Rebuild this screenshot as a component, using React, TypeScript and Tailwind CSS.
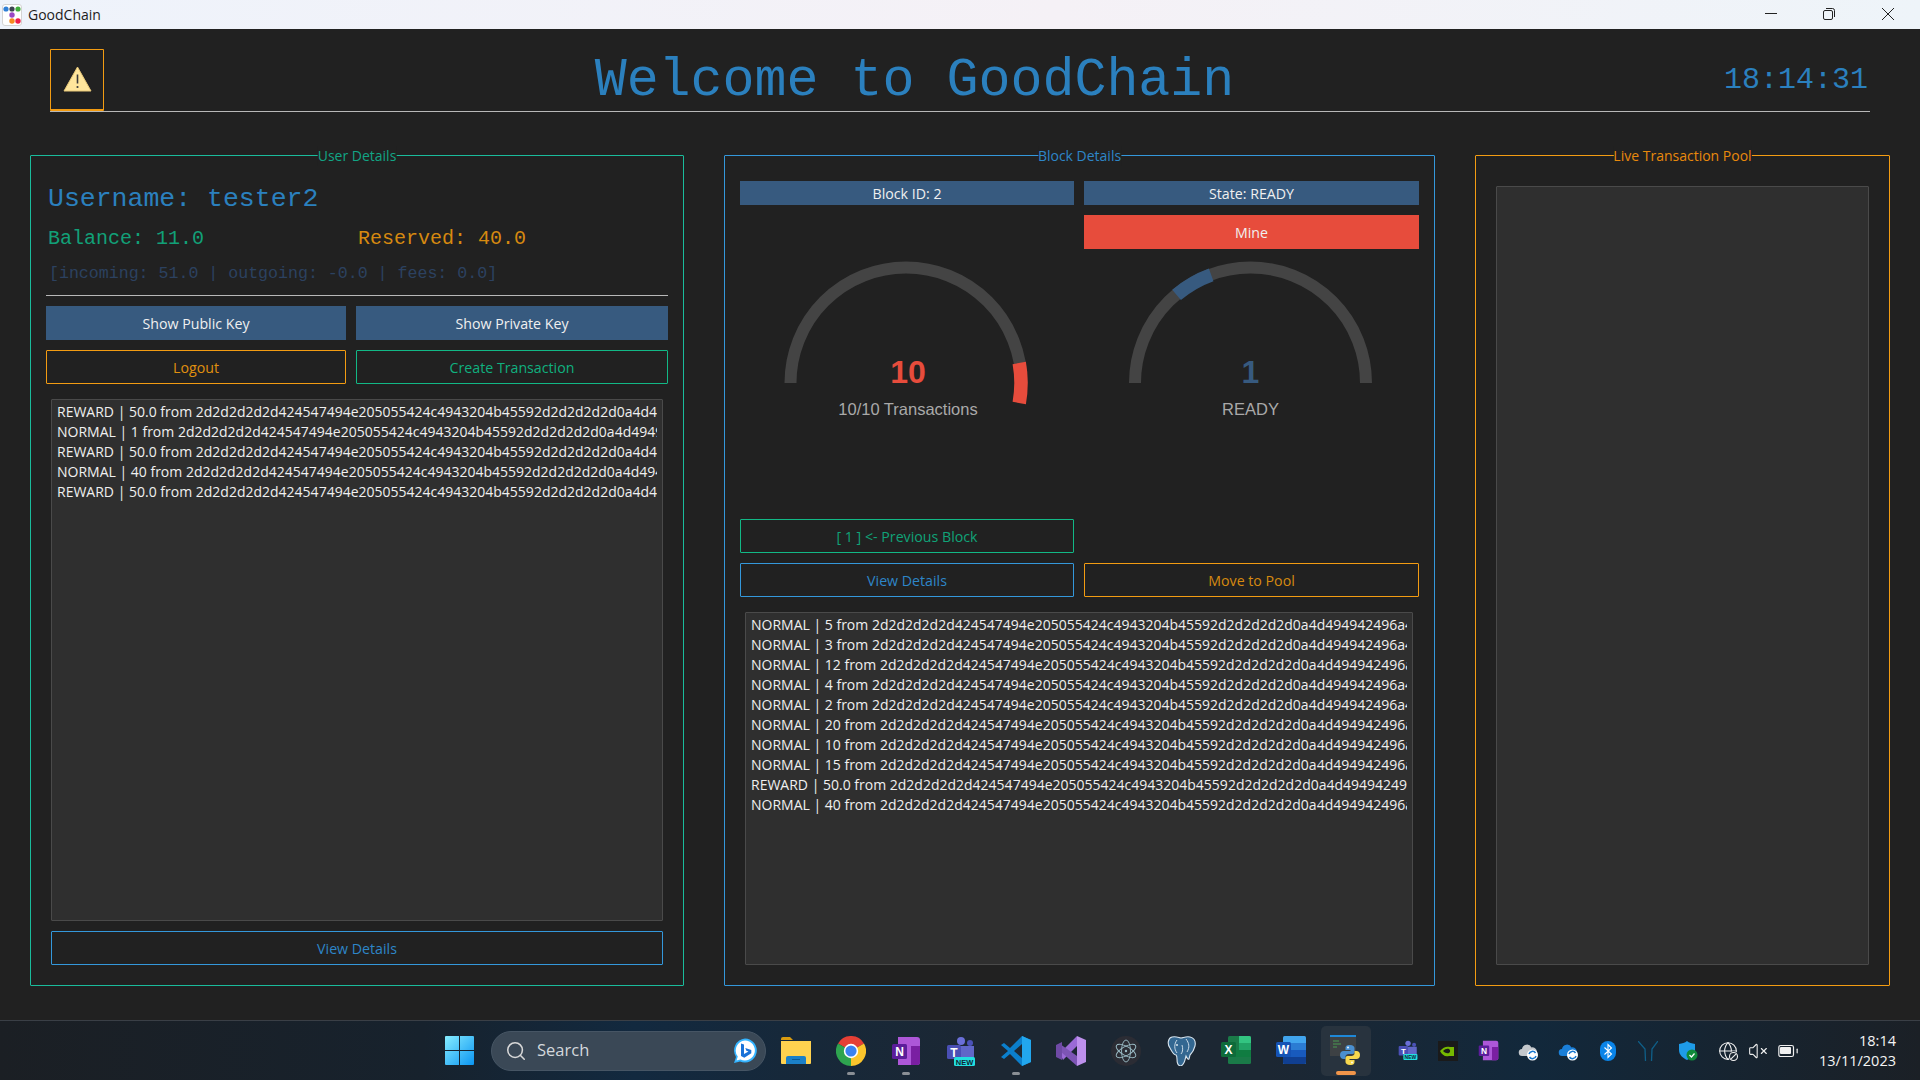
import { Battery, Globe, Search, VolumeX } from "lucide-react";
import type { ReactNode } from "react";

const HEX =
  "2d2d2d2d2d424547494e205055424c4943204b45592d2d2d2d2d0a4d494942496a414e42676b71686b6947397730424151454641414f43415138414d49494243";

const userTx = ["REWARD | 50.0", "NORMAL | 1", "REWARD | 50.0", "NORMAL | 40", "REWARD | 50.0"];
const blockTx = [
  "NORMAL | 5",
  "NORMAL | 3",
  "NORMAL | 12",
  "NORMAL | 4",
  "NORMAL | 2",
  "NORMAL | 20",
  "NORMAL | 10",
  "NORMAL | 15",
  "REWARD | 50.0",
  "NORMAL | 40",
];

function Panel({
  title,
  border,
  text,
  width,
  children,
}: {
  title: string;
  border: string;
  text: string;
  width: string;
  children: ReactNode;
}) {
  return (
    <section className={`relative flex flex-col rounded-[1px] border ${border} ${width}`}>
      <span className={`absolute left-1/2 top-[-10px] -translate-x-1/2 bg-[#212121] text-[14px] leading-[20px] ${text}`}>
        {title}
      </span>
      {children}
    </section>
  );
}

function TxList({ rows, className }: { rows: string[]; className: string }) {
  return (
    <div className={`overflow-hidden rounded-[1px] border border-[#4a4a4a] bg-[#2f2f2f] px-[5px] pt-[2px] ${className}`}>
      <div className="overflow-hidden whitespace-nowrap text-[14px] leading-[20px] text-[#f0f0f0]">
        {rows.map((row, i) => (
          <div key={i}>
            {row} from {HEX}
          </div>
        ))}
      </div>
    </div>
  );
}

function FilledButton({ label, className }: { label: string; className: string }) {
  return (
    <button className={`flex items-center justify-center pt-px text-[14.2px] text-[#f0f0f0] ${className}`}>{label}</button>
  );
}

function OutlineButton({ label, className }: { label: string; className: string }) {
  return (
    <button className={`flex items-center justify-center rounded-[1px] border bg-transparent pt-px text-[14.2px] ${className}`}>
      {label}
    </button>
  );
}

function Gauge({
  from,
  to,
  value,
  label,
  color,
  textX,
}: {
  from: number;
  to: number;
  value: string;
  label: string;
  color: string;
  textX: number;
}) {
  const cx = 166;
  const cy = 124;
  const r = 115;
  const point = (deg: number) => {
    const a = (deg * Math.PI) / 180;
    return `${cx - r * Math.cos(a)} ${cy - r * Math.sin(a)}`;
  };
  return (
    <svg viewBox="0 0 334 170" className="h-[170px] w-full">
      <path d={`M${cx - 115.5} ${cy}A115.5 115.5 0 0 1 ${cx + 115.5} ${cy}`} fill="none" stroke="#444444" strokeWidth="12" />
      <path d={`M${point(from)}A${r} ${r} 0 0 1 ${point(to)}`} fill="none" stroke={color} strokeWidth="13.5" />
      <text x={textX} y="124" textAnchor="middle" fontFamily="Liberation Sans" fontWeight="700" fontSize="32" fill={color}>
        {value}
      </text>
      <text x={textX} y="156" textAnchor="middle" fontFamily="Liberation Sans" fontSize="16.5" fill="#a9a9a9">
        {label}
      </text>
    </svg>
  );
}

function WindowControls() {
  return (
    <div className="ml-auto flex items-center">
      <svg width="60" height="29" viewBox="0 0 60 29" fill="none" stroke="#222" strokeWidth="1">
        <path d="M25 13.5H37" />
      </svg>
      <svg width="60" height="29" viewBox="0 0 60 29" fill="none" stroke="#222" strokeWidth="1">
        <rect x="23.5" y="10.5" width="9" height="9" rx="1.5" />
        <path d="M26 8.5h6.5a2 2 0 0 1 2 2V17" />
      </svg>
      <svg width="60" height="29" viewBox="0 0 60 29" fill="none" stroke="#222" strokeWidth="1">
        <path d="M22 8l12 12M34 8L22 20" />
      </svg>
    </div>
  );
}

function AppLogo() {
  return (
    <svg width="20" height="22" viewBox="0 0 20 22" className="ml-[2px] shrink-0">
      <rect x="0.5" y="0.5" width="19" height="21" rx="2.5" fill="#fff" stroke="#d4d4d4" />
      <circle cx="4" cy="5" r="2.6" fill="#2f7fd6" />
      <circle cx="10" cy="5" r="2.6" fill="#3c4450" />
      <circle cx="16" cy="5" r="2.6" fill="#3fae3a" />
      <circle cx="10" cy="11" r="2.7" fill="#9a48c4" />
      <circle cx="10" cy="17" r="2.7" fill="#f58a1f" />
      <circle cx="16" cy="17" r="2.7" fill="#ee1f4a" />
    </svg>
  );
}

function WarningIcon() {
  return (
    <svg width="29" height="26" viewBox="0 0 29 26">
      <path d="M14.5 1L28 25H1Z" fill="#ffe69c" stroke="#e8c878" strokeWidth="1" strokeLinejoin="round" />
      <path d="M14.5 8.5V17.5" stroke="#3a3a3a" strokeWidth="1.6" />
      <circle cx="14.5" cy="21" r="1.1" fill="#3a3a3a" />
    </svg>
  );
}

function WinLogo() {
  return (
    <svg width="29" height="29" viewBox="0 0 29 29" className="shrink-0">
      <defs>
        <linearGradient id="win" x1="0" y1="0" x2="1" y2="1">
          <stop offset="0" stopColor="#86ecff" />
          <stop offset="1" stopColor="#0b95f2" />
        </linearGradient>
      </defs>
      <path d="M0 1a1 1 0 0 1 1-1h13v14H0ZM15 0h13a1 1 0 0 1 1 1v13H15ZM0 15h14v14H1a1 1 0 0 1-1-1ZM15 15h14v13a1 1 0 0 1-1 1H15Z" fill="url(#win)" />
    </svg>
  );
}

function BingIcon() {
  return (
    <svg width="26" height="26" viewBox="0 0 26 26">
      <path d="M13 .5a12 12 0 1 1-5 23l-6 1.500 2-6A12 12 0 0 1 13 .5Z" fill="#35b4ff" />
      <path d="M13 2.500a10 10 0 1 1-4.500 19l-4 1 1.300-4A10 10 0 0 1 13 2.500Z" fill="#fff" />
      <path d="M9 5.500l3 1v9.500l4.500-2.500-2.200-.8-1-2.700 6 2v3.300l-7 4.500L9 18Z" fill="#1a73d8" />
    </svg>
  );
}

function FolderIcon() {
  return (
    <svg width="30" height="27" viewBox="0 0 30 27">
      <path d="M0 2a2 2 0 0 1 2-2h7l3 3h-12Z" fill="#d99c10" />
      <path d="M0 4h30v22a1 1 0 0 1-1 1H1a1 1 0 0 1-1-1Z" fill="#ffd24f" />
      <path d="M5 27v-6a2 2 0 0 1 2-2h16a2 2 0 0 1 2 2v6Z" fill="#1b80c8" />
      <path d="M11 22.5h8" stroke="#0d5a96" strokeWidth="1" />
    </svg>
  );
}

function ChromeIcon() {
  return (
    <svg width="30" height="30" viewBox="0 0 30 30">
      <path d="M15 15L2 7.5A15 15 0 0 1 28 7.5Z" fill="#e53f35" />
      <path d="M15 15L28 7.5A15 15 0 0 1 15 30Z" fill="#fbc52c" />
      <path d="M15 15L15 30A15 15 0 0 1 2 7.5Z" fill="#2ea44f" />
      <circle cx="15" cy="15" r="7.2" fill="#fff" />
      <circle cx="15" cy="15" r="5.6" fill="#3b82f0" />
    </svg>
  );
}

function OneNoteIcon({ size = 30 }: { size?: number }) {
  return (
    <svg width={size} height={size} viewBox="0 0 30 30">
      <path d="M7 1h19a3 3 0 0 1 3 3v22a3 3 0 0 1-3 3H7Z" fill="#ad57d8" />
      <path d="M20 10h9v9h-9ZM20 19h9v7a3 3 0 0 1-3 3h-6Z" fill="#7a1fa2" />
      <rect x="1" y="8" width="15" height="15" rx="1.5" fill="#5b1d9a" />
      <text x="8.5" y="20" textAnchor="middle" fontFamily="Liberation Sans" fontWeight="700" fontSize="12" fill="#fff">
        N
      </text>
    </svg>
  );
}

function TeamsIcon({ scale = 1 }: { scale?: number }) {
  return (
    <svg width={30 * scale} height={30 * scale} viewBox="0 0 30 30">
      <circle cx="15" cy="5" r="4" fill="#6a6fd8" />
      <circle cx="24" cy="7" r="3" fill="#4b52b8" />
      <path d="M13 10h15v11a4 4 0 0 1-4 4h-7a4 4 0 0 1-4-4Z" fill="#6067c8" />
      <rect x="1" y="9" width="14" height="14" rx="1.5" fill="#4a4fb5" />
      <text x="8" y="20.5" textAnchor="middle" fontFamily="Liberation Sans" fontWeight="700" fontSize="12" fill="#fff">
        T
      </text>
      <rect x="8" y="21" width="21" height="9" rx="1.5" fill="#22dfe0" />
      <text x="18.5" y="28.5" textAnchor="middle" fontFamily="Liberation Sans" fontWeight="700" fontSize="7.5" fill="#123">
        NEW
      </text>
    </svg>
  );
}

function VsCodeIcon() {
  return (
    <svg width="30" height="30" viewBox="0 0 30 30">
      <path d="M21 0l9 4v22l-9 4-12-12-6 5-3-2 7-6-7-6 3-2 6 5Z" fill="#0b7fcc" />
      <path d="M21 0l9 4v22l-9 4Z" fill="#22a7ee" />
      <path d="M21 8l-8 7 8 7Z" fill="#1e2a36" />
    </svg>
  );
}

function VisualStudioIcon() {
  return (
    <svg width="30" height="30" viewBox="0 0 30 30">
      <path d="M21 0L4 17l3 7 14-14Z" fill="#9a6ad6" />
      <path d="M4 8L21 20v10L4 15Z" fill="#7d55b5" />
      <path d="M0 9l6-3v18l-6-3Z" fill="#6f4aa6" />
      <path d="M21 0l9 4v22l-9 4Z" fill="#bd90ec" />
    </svg>
  );
}

function ElectronIcon() {
  return (
    <svg width="30" height="30" viewBox="0 0 30 30">
      <circle cx="15" cy="15" r="15" fill="#2b2c34" />
      <g fill="none" stroke="#9bbcc6" strokeWidth="0.9">
        <ellipse cx="15" cy="15" rx="11" ry="4.5" transform="rotate(30 15 15)" />
        <ellipse cx="15" cy="15" rx="11" ry="4.5" transform="rotate(90 15 15)" />
        <ellipse cx="15" cy="15" rx="11" ry="4.5" transform="rotate(150 15 15)" />
      </g>
      <circle cx="15" cy="15" r="1.2" fill="#9bbcc6" />
    </svg>
  );
}

function PostgresIcon() {
  return (
    <svg width="30" height="30" viewBox="0 0 30 30">
      <path
        d="M6 1c5-1 7 1 9 1s5-2 9-1c4 1 6 4 5 9-1 4-3 7-5 9l-1 4c-1 1-2-1-3-3-1 3-1 8-5 10-3 0-4-2-4-7 0-2 0-3-1-4-2 0-4-3-6-7C1 8 2 2 6 1Z"
        fill="#336791"
        stroke="#d8e4ee"
        strokeWidth="1.1"
      />
      <path d="M11 4c-3 4-3 9 0 13M20 3c3 4 4 8 1 13M15 18c2-2 2-6 1-9" fill="none" stroke="#d8e4ee" strokeWidth="0.9" />
      <circle cx="11" cy="9" r="1" fill="#d8e4ee" />
    </svg>
  );
}

function ExcelIcon() {
  return (
    <svg width="30" height="30" viewBox="0 0 30 30">
      <rect x="7" y="0" width="23" height="28" rx="1.5" fill="#1a7a48" />
      <path d="M18 0h10.5a1.5 1.5 0 0 1 1.5 1.5V7H18Z" fill="#33c481" />
      <rect x="18" y="7" width="12" height="7" fill="#21a366" />
      <rect x="7" y="14" width="23" height="7" fill="#107c41" />
      <rect x="0" y="6" width="15" height="15" rx="1.5" fill="#0e6b3a" />
      <text x="7.5" y="18" textAnchor="middle" fontFamily="Liberation Sans" fontWeight="700" fontSize="12" fill="#fff">
        X
      </text>
    </svg>
  );
}

function WordIcon() {
  return (
    <svg width="30" height="30" viewBox="0 0 30 30">
      <rect x="7" y="0" width="23" height="28" rx="1.5" fill="#41a5ee" />
      <rect x="7" y="7" width="23" height="7" fill="#2b7cd3" />
      <rect x="7" y="14" width="23" height="7" fill="#185abd" />
      <path d="M7 21h23v5.5a1.5 1.5 0 0 1-1.5 1.5h-20A1.5 1.5 0 0 1 7 26.5Z" fill="#103f91" />
      <rect x="0" y="6" width="15" height="15" rx="1.5" fill="#1553b5" />
      <text x="7.5" y="18" textAnchor="middle" fontFamily="Liberation Sans" fontWeight="700" fontSize="12" fill="#fff">
        W
      </text>
    </svg>
  );
}

function PythonShellIcon() {
  const snake =
    "M10 0C6 0 5.500 1.500 5.500 3V5H10.500V6H3.500C1.500 6 0 7.500 0 10S1.500 14 3.500 14H5.500V11.500C5.500 10 7 9 8.500 9H12.500C14 9 14.500 8 14.500 6.500V3C14.500 1.500 13 0 10 0Z";
  return (
    <svg width="32" height="31" viewBox="0 0 32 31">
      <rect x="0" y="0" width="26" height="21" fill="#3d4144" />
      <rect x="0" y="0" width="26" height="2" fill="#1e88d8" />
      <path d="M3 6h6M3 9h8M3 12h4" stroke="#4a9a50" strokeWidth="1" />
      <g transform="translate(10 10)">
        <path d={snake} fill="#4a8fd0" />
        <path d={snake} fill="#f7d84e" transform="rotate(180 10 10)" />
        <circle cx="8" cy="2.500" r="0.900" fill="#fff" />
        <circle cx="12" cy="17.500" r="0.900" fill="#fff" />
      </g>
    </svg>
  );
}

function NvidiaIcon() {
  return (
    <svg width="20" height="20" viewBox="0 0 20 20">
      <rect width="20" height="20" fill="#1a1a1a" />
      <path d="M2 10c3-4 7-5 10-4h4v9h-5c-4 1-7-1-9-5Z" fill="#76b900" />
      <path d="M5 10c2-2 4-2.500 6-2 1.500 1 1.500 3 0 4-2 .5-4 0-6-2Z" fill="#1a1a1a" />
    </svg>
  );
}

function SyncBadge() {
  return (
    <g>
      <circle cx="14" cy="14" r="5.5" fill="#fff" />
      <path d="M10.500 13a3.600 3.600 0 0 1 6.500-1M17.500 15a3.600 3.600 0 0 1-6.500 1" fill="none" stroke="#1878d0" strokeWidth="1.500" />
    </g>
  );
}

function CloudIcon({ color }: { color: string }) {
  return (
    <svg width="21" height="20" viewBox="0 0 20 20">
      <path d="M4 15a3.500 3.500 0 0 1-.5-7A5 5 0 0 1 13 6.500 4 4 0 0 1 15 15Z" fill={color} />
      <SyncBadge />
    </svg>
  );
}

function BluetoothIcon() {
  return (
    <svg width="16" height="20" viewBox="0 0 16 20">
      <rect width="16" height="20" rx="8" fill="#0a84e8" />
      <path d="M4.500 6.500l7 6.500-3.500 3.500V3.500l3.500 3.500-7 6.500" fill="none" stroke="#fff" strokeWidth="1.100" />
    </svg>
  );
}

function YIcon() {
  return (
    <svg width="20" height="20" viewBox="0 0 20 20" fill="none" stroke="#0f5f88" strokeWidth="1.300">
      <path d="M0 0l7 8 .5 12M20 0l-6 8-.5 12" />
    </svg>
  );
}

function ShieldIcon() {
  return (
    <svg width="20" height="20" viewBox="0 0 20 20">
      <path d="M9 0c2 2 5 2.500 8 3v6c0 5-4 8-8 10-4-2-8-5-8-10V3c3-.5 6-1 8-3Z" fill="#1e9be8" />
      <circle cx="14" cy="14" r="5.500" fill="#0f8a3a" />
      <path d="M11.500 14l2 2 3-3.500" fill="none" stroke="#fff" strokeWidth="1.200" />
    </svg>
  );
}

function GlobeBlocked() {
  return (
    <div className="relative">
      <Globe size={20} strokeWidth={1.3} className="text-[#f0f0f0]" />
      <svg width="11" height="11" viewBox="0 0 11 11" className="absolute bottom-[-1px] right-[-1px]">
        <circle cx="5.500" cy="5.500" r="5.200" fill="#1a2530" />
        <circle cx="5.500" cy="5.500" r="4" fill="none" stroke="#f0f0f0" strokeWidth="1.100" />
        <path d="M2.800 8.200l5.400-5.400" stroke="#f0f0f0" strokeWidth="1.100" />
      </svg>
    </div>
  );
}

function BatteryIcon() {
  return (
    <div className="relative">
      <Battery size={22} strokeWidth={1.3} className="text-[#f0f0f0]" />
      <span className="absolute left-[3px] top-[7.5px] h-[7px] w-[11px] rounded-[1px] bg-[#f0f0f0]" />
    </div>
  );
}

function TaskbarSlot({ active, dot, children }: { active?: boolean; dot?: boolean; children: ReactNode }) {
  return (
    <div
      className={`relative flex h-[50px] items-center justify-center rounded-[5px] ${
        active ? "mx-[2.5px] w-[50px] bg-[#28333e]" : "w-[55px]"
      }`}
    >
      {children}
      {dot && <span className="absolute bottom-[1px] h-[3px] w-[8px] rounded-full bg-[#8a8f95]" />}
      {active && <span className="absolute bottom-[1px] h-[4px] w-[20px] rounded-full bg-[#f0954a]" />}
    </div>
  );
}

function TraySlot({ children }: { children: ReactNode }) {
  return <div className="flex h-[50px] w-[40px] items-center justify-center">{children}</div>;
}

function Taskbar() {
  return (
    <footer className="flex h-[60px] items-center border-t border-[#3a3f46] bg-[linear-gradient(90deg,#1b1f24_0%,#17222d_22%,#12293f_33%,#1c2733_52%,#1c2733_66%,#12283b_80%,#1b2026_100%)] pl-[445px] pr-[24px]">
      <WinLogo />
      <div className="ml-[17px] flex h-[40px] w-[275px] items-center rounded-full border border-[#465564] bg-[#3a4856] pl-[13px] pr-[7px]">
        <Search size={22} strokeWidth={1.7} className="text-[#d8d8d8]" />
        <span className="ml-[10px] text-[16.5px] text-[#d4d8dc]">Search</span>
        <div className="ml-auto flex">
          <BingIcon />
        </div>
      </div>
      <div className="ml-[2px] flex">
        <TaskbarSlot>
          <FolderIcon />
        </TaskbarSlot>
        <TaskbarSlot dot>
          <ChromeIcon />
        </TaskbarSlot>
        <TaskbarSlot dot>
          <OneNoteIcon />
        </TaskbarSlot>
        <TaskbarSlot>
          <TeamsIcon />
        </TaskbarSlot>
        <TaskbarSlot dot>
          <VsCodeIcon />
        </TaskbarSlot>
        <TaskbarSlot>
          <VisualStudioIcon />
        </TaskbarSlot>
        <TaskbarSlot>
          <ElectronIcon />
        </TaskbarSlot>
        <TaskbarSlot>
          <PostgresIcon />
        </TaskbarSlot>
        <TaskbarSlot>
          <ExcelIcon />
        </TaskbarSlot>
        <TaskbarSlot>
          <WordIcon />
        </TaskbarSlot>
        <TaskbarSlot active>
          <PythonShellIcon />
        </TaskbarSlot>
      </div>
      <div className="ml-[15px] flex">
        <TraySlot>
          <TeamsIcon scale={0.67} />
        </TraySlot>
        <TraySlot>
          <NvidiaIcon />
        </TraySlot>
        <TraySlot>
          <OneNoteIcon size={21} />
        </TraySlot>
        <TraySlot>
          <CloudIcon color="#c4c8cc" />
        </TraySlot>
        <TraySlot>
          <CloudIcon color="#1a7fd8" />
        </TraySlot>
        <TraySlot>
          <BluetoothIcon />
        </TraySlot>
        <TraySlot>
          <YIcon />
        </TraySlot>
        <TraySlot>
          <ShieldIcon />
        </TraySlot>
      </div>
      <div className="ml-[5px] flex w-[90px] items-center">
        <div className="flex w-[30px] justify-center">
          <GlobeBlocked />
        </div>
        <div className="flex w-[29px] justify-center">
          <VolumeX size={20} strokeWidth={1.3} className="text-[#f0f0f0]" />
        </div>
        <div className="flex w-[31px] justify-center">
          <BatteryIcon />
        </div>
      </div>
      <div className="ml-auto text-right text-[14.5px] leading-[20px] text-[#f4f4f4]">
        <div>18:14</div>
        <div>13/11/2023</div>
      </div>
    </footer>
  );
}

export default function App() {
  return (
    <div className="flex h-[1080px] w-[1920px] flex-col overflow-hidden bg-[#212121] font-['Open_Sans',sans-serif]">
      <header className="flex h-[29px] items-center bg-[linear-gradient(90deg,#eef3fb_0%,#f5f1f6_55%,#eef4f9_100%)]">
        <AppLogo />
        <span className="ml-[6px] text-[14px] text-[#1c1c1c]">GoodChain</span>
        <WindowControls />
      </header>

      <main className="flex-1 px-[30px]">
        {/* Heading strip */}
        <div className="mx-[20px] mt-[20px] flex h-[63px] items-stretch border-b border-[#b8b8b8] font-['Liberation_Mono',monospace] text-[#2b80be]">
          <div className="flex w-[54px] items-center justify-center rounded-[1px] border border-b-2 border-[#f39c12] pb-[2px]">
            <WarningIcon />
          </div>
          <div className="flex flex-1 items-center justify-center pl-[1px] pt-[3px] text-[53.3px] leading-none">
            Welcome to GoodChain
          </div>
          <div className="flex w-[146px] items-center justify-start text-[30px] leading-none">18:14:31</div>
        </div>

        <div className="mt-[43px] flex h-[831px] gap-x-[40px]">
          <Panel title="User Details" border="border-[#1abc9c]" text="text-[#12a585]" width="w-[654px]">
            <div className="flex flex-1 flex-col px-[15px] pt-[26px]">
              <div className="ml-[2px] h-[34px] font-['Liberation_Mono',monospace] text-[26.5px] leading-[34px] text-[#2b80be]">
                Username: tester2
              </div>
              <div className="ml-[2px] mt-[10px] flex h-[26px] font-['Liberation_Mono',monospace] text-[20px] leading-[26px]">
                <span className="w-[310px] text-[#12a078]">Balance: 11.0</span>
                <span className="text-[#d68910]">Reserved: 40.0</span>
              </div>
              <div className="ml-[3px] mt-[11px] h-[22px] font-['Liberation_Mono',monospace] text-[16.6px] leading-[22px] text-[#2c4160]">
                [incoming: 51.0 | outgoing: -0.0 | fees: 0.0]
              </div>
              <div className="mt-[10px] h-px bg-[#b8b8b8]" />
              <div className="mt-[10px] grid grid-cols-[300px_312px] gap-x-[10px] gap-y-[10px]">
                <FilledButton label="Show Public Key" className="h-[34px] bg-[#375a7f]" />
                <FilledButton label="Show Private Key" className="h-[34px] bg-[#375a7f]" />
                <OutlineButton label="Logout" className="h-[34px] border-[#f39c12] text-[#e0900f]" />
                <OutlineButton label="Create Transaction" className="h-[34px] border-[#12b886] text-[#10b07f]" />
              </div>
              <TxList rows={userTx} className="mx-[5px] mt-[15px] h-[522px]" />
              <OutlineButton label="View Details" className="mx-[5px] mt-[10px] h-[34px] border-[#3498db] text-[#2e86c8]" />
            </div>
          </Panel>

          <Panel title="Block Details" border="border-[#3498db]" text="text-[#2e86c8]" width="w-[711px]">
            <div className="px-[15px] pt-[25px]">
              <div className="grid grid-cols-[334px_335px] grid-rows-[24px_34px_250px_34px_34px] gap-x-[10px] gap-y-[10px]">
                <FilledButton label="Block ID: 2" className="bg-[#375a7f]" />
                <FilledButton label="State: READY" className="bg-[#375a7f]" />
                <div />
                <FilledButton label="Mine" className="bg-[#e74c3c]" />
                <Gauge from={170} to={190} value="10" label="10/10 Transactions" color="#e74c3c" textX={168} />
                <Gauge from={50} to={70} value="1" label="READY" color="#375a7f" textX={166} />
                <OutlineButton label="[ 1 ] <- Previous Block" className="border-[#12b886] text-[#10a378]" />
                <div />
                <OutlineButton label="View Details" className="border-[#3498db] text-[#2e86c8]" />
                <OutlineButton label="Move to Pool" className="border-[#f39c12] text-[#d68910]" />
              </div>
              <TxList rows={blockTx} className="ml-[5px] mr-[6px] mt-[15px] h-[353px]" />
            </div>
          </Panel>

          <Panel title="Live Transaction Pool" border="border-[#f39c12]" text="text-[#e8890c]" width="w-[415px]">
            <div className="mx-[20px] mt-[30px] h-[779px] rounded-[1px] border border-[#4a4a4a] bg-[#2f2f2f]" />
          </Panel>
        </div>
      </main>

      <Taskbar />
    </div>
  );
}
